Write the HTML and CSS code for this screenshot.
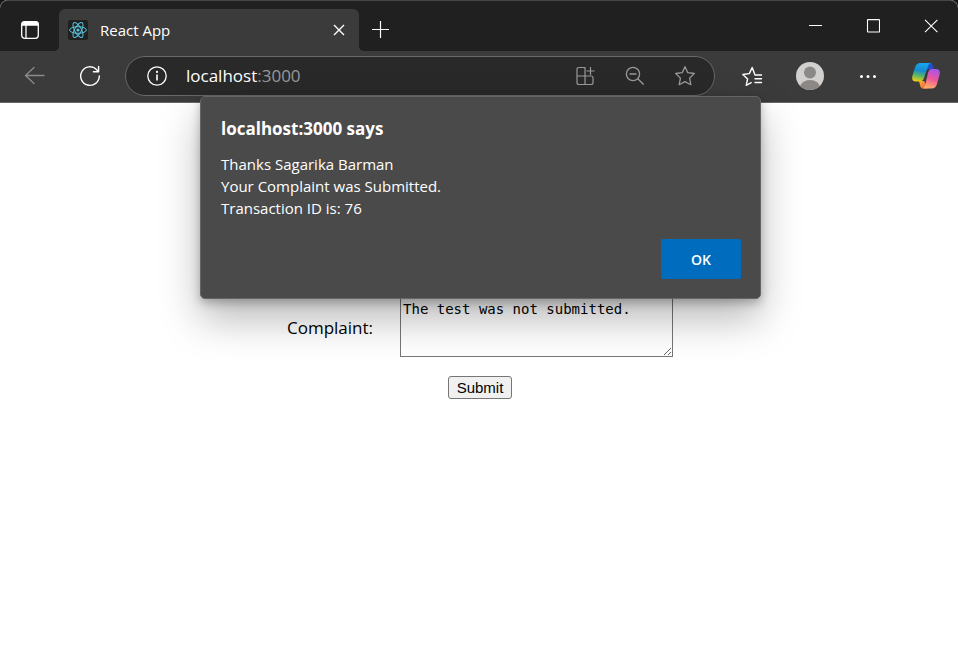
FILE: index.html
```html
<!DOCTYPE html>
<html lang="en">
<head>
<meta charset="utf-8">
<meta name="viewport" content="width=device-width, initial-scale=1">
<title>React App</title>
<link rel="stylesheet" href="styles.css">
</head>
<body>
<div class="window">
  <header class="titlebar">
    <button class="icon-button tab-actions" aria-label="Tab actions">
      <svg width="20" height="20" viewBox="0 0 20 20" fill="none" stroke="#fff" stroke-width="1.3">
        <rect x="1.7" y="1.7" width="16.6" height="16.6" rx="3"/>
        <path d="M2 5V4q0-2 2-2h12q2 0 2 2v1z" fill="#fff"/>
        <path d="M6 5v13"/>
      </svg>
    </button>
    <div class="tab">
      <svg class="favicon" width="20" height="20" viewBox="0 0 20 20" fill="none" stroke="#58c4dc">
        <rect width="20" height="20" rx="2" fill="#202020" stroke="none"/>
        <ellipse cx="10" cy="10" rx="8.4" ry="3.3"/>
        <ellipse cx="10" cy="10" rx="8.4" ry="3.3" transform="rotate(60 10 10)"/>
        <ellipse cx="10" cy="10" rx="8.4" ry="3.3" transform="rotate(120 10 10)"/>
        <circle cx="10" cy="10" r="1.6" fill="#58c4dc" stroke="none"/>
      </svg>
      <span class="tab-title">React App</span>
      <button class="icon-button tab-close" aria-label="Close tab">
        <svg width="12" height="12" viewBox="0 0 12 12" stroke="#fff" stroke-width="1.4"><path d="M1 1l10 10M11 1L1 11"/></svg>
      </button>
    </div>
    <button class="icon-button new-tab" aria-label="New tab">
      <svg width="18" height="18" viewBox="0 0 18 18" stroke="#fff" stroke-width="1.2"><path d="M9.5 0v17M1 8.500h17"/></svg>
    </button>
    <div class="window-controls">
      <button class="icon-button" aria-label="Minimize">
        <svg width="14" height="14" viewBox="0 0 14 14" stroke="#fff"><path d="M1 6.5h13"/></svg>
      </button>
      <button class="icon-button" aria-label="Maximize">
        <svg width="14" height="14" viewBox="0 0 14 14" fill="none" stroke="#fff" stroke-width="1.1"><rect x="1.5" y=".6" width="12" height="12.4" rx=".5"/></svg>
      </button>
      <button class="icon-button" aria-label="Close">
        <svg width="14" height="14" viewBox="0 0 14 14" stroke="#fff" stroke-width="1.1"><path d="M1 .8l12.4 12.4M13.4 .8L1 13.2"/></svg>
      </button>
    </div>
  </header>

  <div class="toolbar">
    <nav class="navigation">
      <button class="icon-button" aria-label="Back">
        <svg width="22" height="20" viewBox="0 0 22 20" fill="none" stroke="#8a8a8a" stroke-width="1.3" stroke-linecap="round" stroke-linejoin="round"><path d="M20 9.500H1.500M10 1.500l-8.500 8L10 17.500"/></svg>
      </button>
      <button class="icon-button" aria-label="Refresh">
        <svg width="22" height="22" viewBox="0 0 22 22" fill="none" stroke="#fff" stroke-width="1.400" stroke-linecap="round" stroke-linejoin="round"><path d="M20.300 11a9.300 9.300 0 1 1-2.800-6.600l1.900 2M19.600 1.500v5.200h-5.200"/></svg>
      </button>
    </nav>
    <div class="omnibox">
      <button class="icon-button" aria-label="Site information">
        <svg width="20" height="20" viewBox="0 0 20 20" fill="none" stroke="#fff" stroke-width="1.3"><circle cx="10" cy="10" r="9.200"/><path d="M10 8.500v6" stroke-width="1.600"/><circle cx="10" cy="5.900" r="1.100" fill="#fff" stroke="none"/></svg>
      </button>
      <div class="address">localhost<span class="port">:3000</span></div>
      <div class="page-actions">
        <button class="icon-button" aria-label="Apps">
          <svg width="20" height="20" viewBox="0 0 20 20" fill="none" stroke="#999" stroke-width="1.200"><path d="M10 10V1.500H4q-2 0-2 2v13q0 2 2 2h12q2 0 2-2v-4.500q0-2-2-2H2M10 10v8.500M15.500 1v8M11.500 5h8"/></svg>
        </button>
        <button class="icon-button" aria-label="Zoom out">
          <svg width="20" height="20" viewBox="0 0 20 20" fill="none" stroke="#999" stroke-width="1.300" stroke-linecap="round"><circle cx="8" cy="8" r="6.600"/><path d="M5 8h6M12.800 12.700l5.500 5.500"/></svg>
        </button>
        <button class="icon-button" aria-label="Add to favorites">
          <svg width="22" height="22" viewBox="0 0 22 22" fill="none" stroke="#999" stroke-width="1.300" stroke-linejoin="round"><path d="M11 1.700l2.800 6 6.500.8-4.700 4.600 1.200 6.600L11 16.600l-5.800 3.100 1.200-6.600L1.700 8.500l6.500-.8z"/></svg>
        </button>
      </div>
    </div>
    <div class="tools">
      <button class="icon-button" aria-label="Favorites">
        <svg width="22" height="22" viewBox="0 0 22 22" fill="none" stroke="#fff" stroke-width="1.400" stroke-linecap="round" stroke-linejoin="round"><path d="M20.500 10h-6.500L11.200 2.500 8.300 8.600l-6.500.9 4.800 4.500L5.200 20.400l5-2.700M14 13.800h6.500M14 17.500h6.500"/></svg>
      </button>
      <button class="icon-button" aria-label="Profile">
        <svg width="28" height="28" viewBox="0 0 28 28">
          <defs><clipPath id="avatar"><circle cx="14" cy="14" r="14"/></clipPath></defs>
          <g clip-path="url(#avatar)"><path d="M0 0h28v28H0z" fill="#d2d0ce"/><circle cx="14" cy="10.500" r="6" fill="#8b8886"/><ellipse cx="14" cy="26" rx="10" ry="8" fill="#8b8886"/></g>
        </svg>
      </button>
      <button class="icon-button" aria-label="Settings and more">
        <svg width="20" height="6" viewBox="0 0 20 6" fill="#fff"><circle cx="3.500" cy="3.500" r="1.500"/><circle cx="10" cy="3.500" r="1.500"/><circle cx="16.500" cy="3.500" r="1.500"/></svg>
      </button>
      <button class="icon-button" aria-label="Copilot">
        <svg width="28" height="28" viewBox="0 0 28 28">
          <defs>
            <linearGradient id="cool" x1=".5" y1="0" x2=".3" y2="1"><stop stop-color="#17a7ee"/><stop offset=".4" stop-color="#168bd2"/><stop offset=".68" stop-color="#58b567"/><stop offset="1" stop-color="#f3d00c"/></linearGradient>
            <linearGradient id="warm" x1=".7" y1="0" x2=".4" y2="1"><stop stop-color="#a456ee"/><stop offset=".5" stop-color="#ed579b"/><stop offset="1" stop-color="#ffb067"/></linearGradient>
            <linearGradient id="deep"><stop stop-color="#175ce0"/><stop offset="1" stop-color="#2349c0"/></linearGradient>
            <linearGradient id="ember" x1="0" y1="0" x2="1" y2="1"><stop stop-color="#f7b52e"/><stop offset="1" stop-color="#f2504b"/></linearGradient>
          </defs>
          <path d="M13 1h5q2 0 2.700 2l1.300 4h-5q-3 0-4 4z" fill="url(#deep)"/>
          <path d="M7 19h5l4 7.500h-5q-2 0-2.600-2z" fill="url(#ember)"/>
          <path d="M8.500 1H19q-2 0-3 3l-4 12q-1 3.500-5 3.500H4q-5 0-3.500-6L3 5.500Q4.300 1 8.500 1z" fill="url(#cool)"/>
          <path d="M20 7h4q5 0 3.500 6L25 22q-1.300 4.500-5.500 4.500H10q2 0 3-3L16 11q1-4 4-4z" fill="url(#warm)"/>
        </svg>
      </button>
    </div>
  </div>

  <main class="page">
    <form class="complaint-form">
      <div class="field">
        <label for="complaint">Complaint:</label>
        <textarea id="complaint" spellcheck="false">The test was not submitted.</textarea>
      </div>
      <button class="submit" type="button">Submit</button>
    </form>
  </main>

  <section class="dialog" role="alertdialog" aria-labelledby="dialog-title" aria-describedby="dialog-message">
    <h1 id="dialog-title">localhost:3000 says</h1>
    <p id="dialog-message">Thanks Sagarika Barman<br>Your Complaint was Submitted.<br>Transaction ID is: 76</p>
    <button class="ok">OK</button>
  </section>
</div>
</body>
</html>
```

FILE: styles.css
```css
* {
  box-sizing: border-box;
}

body {
  margin: 0;
  background: #151515;
  font-family: "Open Sans", "Noto Sans", sans-serif;
}

svg {
  display: block;
}

.window {
  position: relative;
  display: flex;
  flex-direction: column;
  min-height: 100vh;
  background: #fff;
  border-radius: 8px 8px 0 0;
}

.icon-button {
  display: flex;
  align-items: center;
  justify-content: center;
  flex: none;
  padding: 0;
  border: 0;
  background: none;
}

.titlebar {
  display: flex;
  align-items: flex-end;
  height: 51px;
  background: #202020;
  border-top: 1px solid #464646;
  border-radius: 8px 8px 0 0;
}

.tab-actions {
  width: 59px;
  height: 42px;
}

.tab {
  position: relative;
  display: flex;
  align-items: center;
  gap: 12px;
  width: 300px;
  height: 42px;
  padding: 0 9px;
  background: #3b3b3b;
  border-radius: 6px 6px 0 0;
  color: #fff;
  font-size: 15px;
}

.tab::before,
.tab::after {
  content: "";
  position: absolute;
  bottom: 0;
  width: 5px;
  height: 5px;
}

.tab::before {
  right: 100%;
  background: radial-gradient(circle at 0 0, #202020 5px, #3b3b3b 5px);
}

.tab::after {
  left: 100%;
  background: radial-gradient(circle at 100% 0, #202020 5px, #3b3b3b 5px);
}

.tab-title {
  flex: 1;
}

.tab-close {
  width: 22px;
  height: 22px;
}

.new-tab {
  width: 42px;
  height: 42px;
}

.window-controls {
  display: flex;
  align-self: flex-start;
  gap: 4px;
  margin-left: auto;
}

.window-controls .icon-button {
  width: 54px;
  height: 50px;
}

.toolbar {
  display: flex;
  align-items: center;
  gap: 8px;
  height: 52px;
  padding: 0 3px 2px 7px;
  background: #3b3b3b;
  border-bottom: 1px solid #686868;
}

.navigation,
.tools,
.page-actions {
  display: flex;
}

.navigation .icon-button {
  width: 55px;
  height: 40px;
}

.omnibox {
  display: flex;
  align-items: center;
  flex: 1;
  height: 40px;
  padding: 0 4px 0 21px;
  background: #292929;
  border: 1px solid #686868;
  border-radius: 20px;
}

.address {
  flex: 1;
  padding-left: 19px;
  color: #fff;
  font-size: 17px;
  line-height: 24px;
}

.port {
  color: #999;
}

.page-actions .icon-button {
  width: 50px;
  height: 38px;
}

.tools .icon-button {
  width: 58px;
  height: 40px;
}

.page {
  flex: 1;
  padding-top: 194px;
  padding-left: 2px;
}

.complaint-form {
  display: flex;
  flex-direction: column;
  align-items: center;
  gap: 19px;
}

.field {
  display: flex;
  align-items: center;
  gap: 27px;
}

.field label {
  color: #000;
  font-size: 17px;
}

.field textarea {
  width: 273px;
  height: 60px;
  padding: 3px 2px;
  border: 1px solid #767676;
  background: transparent;
  color: #000;
  font-family: "DejaVu Sans Mono", monospace;
  font-size: 14px;
  line-height: 16px;
}

.submit {
  height: 23px;
  padding: 0 8px;
  border: 1px solid #767676;
  border-radius: 3px;
  background: #f0f0f0;
  color: #000;
  font-family: "Liberation Sans", sans-serif;
  font-size: 15px;
}

.dialog {
  position: absolute;
  top: 96px;
  left: 50%;
  display: flex;
  flex-direction: column;
  width: 561px;
  margin-left: -279px;
  padding: 20px 19px 19px 20px;
  background: #4a4a4a;
  border: 1px solid #656565;
  border-radius: 5px;
  box-shadow: 0 20px 40px rgba(0, 0, 0, 0.28), 0 4px 10px rgba(0, 0, 0, 0.25);
  color: #fff;
}

.dialog h1 {
  margin: 0 0 12px;
  font-size: 17px;
  line-height: 24px;
}

.dialog p {
  margin: 0 0 20px;
  font-size: 15px;
  line-height: 22px;
}

.ok {
  align-self: flex-end;
  width: 80px;
  height: 40px;
  border: 0;
  border-radius: 2px;
  background: #006cbe;
  color: #fff;
  font-family: inherit;
  font-size: 14px;
  font-weight: 600;
}
```
